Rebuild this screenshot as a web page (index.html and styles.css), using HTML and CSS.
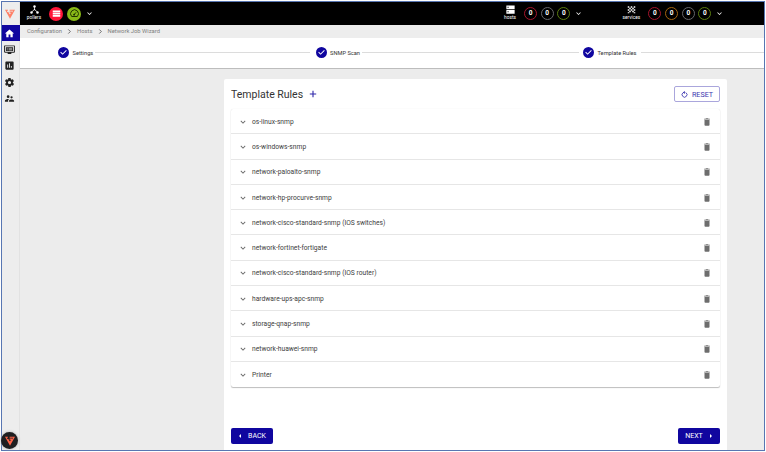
FILE: index.html
```
<!DOCTYPE html>
<html lang="en">
<head>
<meta charset="utf-8">
<title>Network Job Wizard</title>
<link rel="stylesheet" href="styles.css">
</head>
<body>
<svg class="defs" width="0" height="0">
  <symbol id="chev" viewBox="0 0 24 24"><path d="M7.4 8.6 12 13.2l4.6-4.6L18 10l-6 6-6-6z"/></symbol>
  <symbol id="trash" viewBox="0 0 24 24"><path d="M6 19c0 1.100.9 2 2 2h8c1.100 0 2-.9 2-2V7H6v12zM19 4h-3.500l-1-1h-5l-1 1H5v2h14V4z"/></symbol>
  <symbol id="check" viewBox="0 0 24 24"><path d="M12 0a12 12 0 1 0 0 24 12 12 0 0 0 0-24zm-2 17-5-5 1.400-1.400 3.600 3.600 7.600-7.600L19 8l-9 9z"/></symbol>
  <symbol id="vlogo" viewBox="0 0 24 24"><path fill="none" stroke="currentColor" stroke-width="2.600" d="M7 3H2l10 18L22 3H11M6.500 7 12 16l4.500-8.500H11"/></symbol>
</svg>
<div class="frame">
  <nav class="side">
    <div class="logo"><svg viewBox="0 0 24 24"><use href="#vlogo"/></svg></div>
    <div class="item active"><svg viewBox="0 0 24 24"><path d="M10 20v-6h4v6h5v-8h3L12 3 2 12h3v8z"/></svg></div>
    <div class="item"><svg viewBox="0 0 24 24"><path fill-rule="evenodd" d="M2 3h20c1 0 2 1 2 2v12c0 1-1 2-2 2h-6v3H8v-3H2c-1 0-2-1-2-2V5c0-1 1-2 2-2zm0 2v12h20V5zM4 7h16v8H4zm2 1.500v1.500h2V8.500zm4 0v1.500h8V8.500zm-4 3.500v1.500h2V12zm4 0v1.500h8V12z"/></svg></div>
    <div class="item"><svg viewBox="0 0 24 24"><path d="M19 3H5a2 2 0 0 0-2 2v14c0 1.100.9 2 2 2h14a2 2 0 0 0 2-2V5a2 2 0 0 0-2-2zM9 17H7v-7h2v7zm4 0h-2V7h2v10zm4 0h-2v-4h2v4z"/></svg></div>
    <div class="item"><svg viewBox="0 0 24 24"><path d="M19.400 13a7.500 7.500 0 0 0 0-2l2.100-1.600c.2-.2.2-.4.1-.6l-2-3.500c-.1-.2-.4-.3-.6-.2l-2.500 1a7 7 0 0 0-1.700-1l-.4-2.700c0-.2-.2-.4-.5-.4h-4c-.2 0-.4.2-.5.4l-.4 2.700c-.6.2-1.200.6-1.700 1l-2.500-1c-.2-.1-.5 0-.6.2l-2 3.500c-.1.200-.1.500.1.600L4.600 11a8 8 0 0 0 0 2l-2.100 1.600c-.2.200-.2.400-.1.600l2 3.500c.1.200.4.300.6.200l2.500-1c.5.400 1.100.7 1.700 1l.4 2.700c0 .2.200.4.500.4h4c.2 0 .4-.2.500-.4l.4-2.700c.6-.2 1.200-.6 1.700-1l2.500 1c.2.100.5 0 .6-.2l2-3.500c.1-.2.1-.5-.1-.6zM12 15.500a3.500 3.500 0 1 1 0-7 3.500 3.500 0 0 1 0 7z"/></svg></div>
    <div class="item"><svg viewBox="0 0 24 24"><path d="M16.500 12a2.500 2.500 0 1 0 0-5 2.500 2.500 0 0 0 0 5zM9 11a3 3 0 1 0 0-6 3 3 0 0 0 0 6zm7.500 3c-1.800 0-5.500.9-5.500 2.800V19h11v-2.200c0-1.900-3.700-2.800-5.500-2.800zM9 13c-2.300 0-7 1.200-7 3.500V19h7v-2.200c0-.9.300-2.300 2.400-3.500-.9-.2-1.700-.3-2.400-.3z"/></svg></div>
    <div class="badge"><svg viewBox="0 0 24 24"><use href="#vlogo"/></svg></div>
  </nav>
  <div class="main">
    <header class="top">
      <div class="res pollers"><svg viewBox="0 0 24 24"><path d="M12 4v8L4 19M12 12l8 7" fill="none" stroke="#fff" stroke-width="2"/><circle cx="12" cy="4" r="3.300"/><circle cx="12" cy="12" r="2"/><circle cx="4" cy="20" r="3.300"/><circle cx="20" cy="20" r="3.300"/></svg><span>pollers</span></div>
      <div class="dot red"><svg viewBox="0 0 24 24"><path d="M2 4h20v4.500H2zM2 10h20v4.500H2zM2 16h20v4.500H2z"/></svg></div>
      <div class="dot green"><svg viewBox="0 0 24 24"><path d="M4.500 20a10.500 10.500 0 1 1 15 0zM11 15l5-6" fill="none" stroke="#1d2a00" stroke-width="2.500"/><circle cx="11" cy="15" r="2.500" fill="#1d2a00"/></svg></div>
      <svg class="more"><use href="#chev"/></svg>
      <div class="res hosts"><svg viewBox="0 0 24 24"><path fill-rule="evenodd" d="M1 1h22v10H1zm3 3.500v3h3v-3zM1 13h22v10H1zm3 3.500v3h3v-3z"/></svg><span>hosts</span></div>
      <div class="ring r">0</div><div class="ring g">0</div><div class="ring l">0</div>
      <svg class="more"><use href="#chev"/></svg>
      <div class="res services"><svg viewBox="0 0 24 24"><path d="M2 3h4v4H2zM10 3h4v4h-4zM18 3h4v4h-4zM6 7h4v4H6zM14 7h4v4h-4zM2 11h4v4H2zM10 11h4v4h-4zM18 11h4v4h-4zM6 15h4v4H6zM14 15h4v4h-4zM2 19h4v3H2zM18 19h4v3h-4z"/></svg><span>services</span></div>
      <div class="ring r">0</div><div class="ring o">0</div><div class="ring g">0</div><div class="ring l">0</div>
      <svg class="more"><use href="#chev"/></svg>
    </header>
    <div class="crumbs"><span class="c1">Configuration</span><svg viewBox="0 0 6 8"><path d="M1.500 1.500 4 4 1.500 6.500"/></svg><span class="c2">Hosts</span><svg viewBox="0 0 6 8"><path d="M1.500 1.500 4 4 1.500 6.500"/></svg><span class="c3">Network Job Wizard</span></div>
    <div class="stepper">
      <svg class="ck"><use href="#check"/></svg><span class="s1">Settings</span><i class="l1"></i>
      <svg class="ck"><use href="#check"/></svg><span class="s2">SNMP Scan</span><i class="l2"></i>
      <svg class="ck"><use href="#check"/></svg><span class="s3">Template Rules</span><i class="l3"></i>
    </div>
    <main class="panel">
      <div class="head"><h1>Template Rules</h1><svg class="plus" viewBox="0 0 8 8"><path d="M4 .8v6.400M.8 4h6.400"/></svg>
        <button class="reset"><svg viewBox="0 0 8 8"><path d="M2.600 1.800a2.800 2.800 0 1 0 3 .1M4.800 1.700H2.700M4.300.3 2.700 1.700l1.600 1.300"/></svg>RESET</button></div>
      <div class="list">
        <div class="row"><svg class="ch"><use href="#chev"/></svg><span>os-linux-snmp</span><svg class="tr"><use href="#trash"/></svg></div>
        <div class="row"><svg class="ch"><use href="#chev"/></svg><span>os-windows-snmp</span><svg class="tr"><use href="#trash"/></svg></div>
        <div class="row"><svg class="ch"><use href="#chev"/></svg><span>network-paloalto-snmp</span><svg class="tr"><use href="#trash"/></svg></div>
        <div class="row"><svg class="ch"><use href="#chev"/></svg><span>network-hp-procurve-snmp</span><svg class="tr"><use href="#trash"/></svg></div>
        <div class="row"><svg class="ch"><use href="#chev"/></svg><span>network-cisco-standard-snmp (IOS switches)</span><svg class="tr"><use href="#trash"/></svg></div>
        <div class="row"><svg class="ch"><use href="#chev"/></svg><span>network-fortinet-fortigate</span><svg class="tr"><use href="#trash"/></svg></div>
        <div class="row"><svg class="ch"><use href="#chev"/></svg><span>network-cisco-standard-snmp (IOS router)</span><svg class="tr"><use href="#trash"/></svg></div>
        <div class="row"><svg class="ch"><use href="#chev"/></svg><span>hardware-ups-apc-snmp</span><svg class="tr"><use href="#trash"/></svg></div>
        <div class="row"><svg class="ch"><use href="#chev"/></svg><span>storage-qnap-snmp</span><svg class="tr"><use href="#trash"/></svg></div>
        <div class="row"><svg class="ch"><use href="#chev"/></svg><span>network-huawei-snmp</span><svg class="tr"><use href="#trash"/></svg></div>
        <div class="row"><svg class="ch"><use href="#chev"/></svg><span>Printer</span><svg class="tr"><use href="#trash"/></svg></div>
      </div>
      <div class="foot">
        <button class="btn"><svg viewBox="0 0 4 6"><path d="M3 1 1 3l2 2z"/></svg>BACK</button>
        <button class="btn next">NEXT<svg viewBox="0 0 4 6"><path d="M1 1l2 2-2 2z"/></svg></button>
      </div>
    </main>
  </div>
</div>
</body>
</html>
```
FILE: styles.css
```
* { box-sizing: border-box; }
body { margin: 0; background: #fff; font-family: Roboto, "Liberation Sans", sans-serif; overflow: hidden; }
svg { display: block; flex: none; }
.defs { position: absolute; }
.frame { width: 764px; height: 450px; margin: 1px; border: 1px solid #5876b2; display: flex; background: #ececec; }
.side { width: 18px; flex: none; border-right: 1px solid #e2e2e2; background: #ededed; display: flex; flex-direction: column; align-items: stretch; }
.logo { height: 23px; display: flex; align-items: center; justify-content: center; color: #ff7f66; }
.logo svg { width: 10px; height: 10px; margin: 1px 0 0 -2px; }
.item { height: 16.500px; display: flex; align-items: center; justify-content: center; fill: #222; padding-right: 3px; width: 18px; }
.item svg { width: 11px; height: 11px; }
.item.active { background: #10069f; fill: #fff; height: 16px; }
.badge { width: 17px; height: 17px; margin: auto 0 1px -1px; border-radius: 50%; background: #1e1e20; color: #ff6347; display: flex; align-items: center; justify-content: center; box-shadow: 0 0 3px #aaa; }
.badge svg { width: 10px; height: 10px; }
.main { flex: 1; min-width: 0; display: flex; flex-direction: column; }
.top { height: 23px; flex: none; background: #000; display: flex; align-items: center; fill: #fff; }
.res { display: flex; flex-direction: column; align-items: center; width: 22px; color: #fff; font-size: 4.800px; line-height: 6px; flex: none; padding-bottom: 1px; }
.res svg { width: 9px; height: 9px; margin-bottom: 1px; }
.pollers { margin-left: 3px; }
.dot { width: 14px; height: 14px; border-radius: 50%; display: flex; align-items: center; justify-content: center; flex: none; }
.dot svg { width: 9px; height: 9px; }
.red { background: #ff1538; margin-left: 4px; }
.green { background: #88b917; margin-left: 4px; }
.more { width: 9px; height: 9px; margin-left: 4px; }
.hosts { margin-left: 405px; }
.hosts + .ring { margin-left: 3px; }
.ring { width: 13px; height: 13px; border: 1px solid; border-radius: 50%; display: flex; align-items: center; justify-content: center; flex: none; margin-left: 3.700px; font-size: 6.500px; font-weight: 700; line-height: 11px; }
.ring { color: #fff; }
.ring.r { border-color: #a5142c; }
.ring.g { border-color: #66666a; }
.ring.l { border-color: #5a7d0e; }
.ring.o { border-color: #a3640f; }
.services { margin-left: 37px; }
.services + .ring { margin-left: 6px; }
.crumbs { height: 12.500px; flex: none; background: #ededed; display: flex; align-items: center; padding-left: 7px; font-size: 5.850px; color: #808080; white-space: nowrap; }
.crumbs svg { width: 5px; height: 7px; fill: none; stroke: #555; stroke-width: 1; }
.c1 { width: 40px; }
.c2 { width: 20.500px; margin-left: 5px; }
.c3 { margin-left: 5px; }
.stepper { height: 31.500px; flex: none; background: #fff; border-bottom: 1px solid #bdbdbd; display: flex; align-items: center; padding-left: 38px; font-size: 5.700px; color: #333; white-space: nowrap; }
.ck { width: 11px; height: 11px; fill: #10069f; }
.s1, .s2, .s3 { margin-left: 3.500px; }
.s1 { width: 22px; }
.s2 { width: 32px; }
.s3 { width: 43px; }
.stepper i { height: 1px; background: #dcdcdc; }
.l1 { width: 215px; margin-right: 6px; }
.l2 { width: 217px; margin-right: 4px; }
.l3 { flex: 1; }
.panel { width: 503px; margin: 10px 0 0 204px; flex: 1; background: #fff; border-radius: 2px 2px 0 0; padding: 0 7px; display: flex; flex-direction: column; }
.head { height: 30px; display: flex; align-items: center; }
h1 { margin: 0; font-size: 10.500px; font-weight: 400; color: #333; white-space: nowrap; width: 73px; }
.plus { width: 8px; height: 8px; margin-left: 5px; fill: none; stroke: #2e26a9; stroke-width: 1.100; }
button { font-family: inherit; }
.reset { margin-left: auto; width: 46px; height: 16px; border: 1px solid #aaa6dc; border-radius: 2px; background: #fff; color: #3d36af; font-size: 7.200px; font-weight: 400; padding: 0; display: flex; align-items: center; justify-content: center; gap: 4px; }
.reset svg { width: 7px; height: 7px; fill: none; stroke: #2e26a9; stroke-width: .9; }
.list { box-shadow: 0 1px 1px #bdbdbd, 0 0 1px #ddd; border-radius: 2px; }
.row { height: 25.300px; display: flex; align-items: center; padding: 1px 8.500px 0 7px; font-size: 6.700px; color: #404040; border-bottom: 1px solid #e6e6e6; white-space: nowrap; }
.row:last-child { border-bottom: 0; }
.ch { width: 10px; height: 10px; fill: #666; margin-right: 4px; }
.tr { width: 10px; height: 10px; fill: #6d6d6d; margin-left: auto; }
.foot { margin-top: auto; display: flex; justify-content: space-between; padding-bottom: 6px; }
.btn { width: 42px; height: 16px; border: 0; border-radius: 2px; background: #10069f; color: #fff; font-size: 7px; padding: 0; display: flex; align-items: center; justify-content: center; gap: 6px; fill: #fff; }
.btn svg { width: 4px; height: 6px; }
```
